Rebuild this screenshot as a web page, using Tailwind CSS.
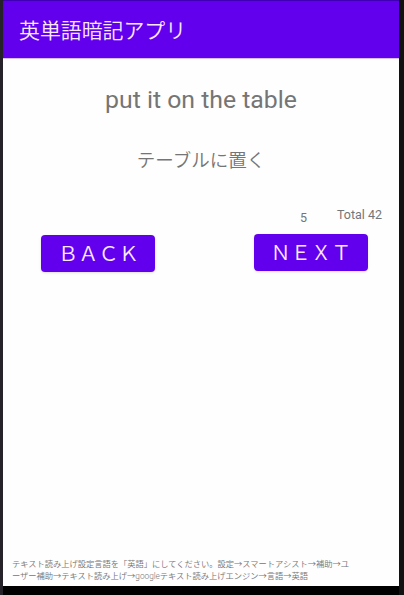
<!DOCTYPE html>
<html lang="ja">
<head>
    <meta charset="UTF-8">
    <meta name="viewport" content="width=device-width, initial-scale=1.0">
    <title>英単語暗記アプリ</title>
    <script src="https://cdn.jsdelivr.net/npm/@tailwindcss/browser@4"></script>
</head>
<body class="h-screen overflow-hidden bg-black font-['Roboto','Noto_Sans_CJK_JP',sans-serif]">
    <div class="h-full border-l-3 border-l-[#252329] border-r-5 border-r-[#111111]">
        <div class="flex h-[586px] flex-col bg-[#fefefe] text-[#757575]">
            <!-- App bar -->
            <header class="flex h-[59px] shrink-0 items-center border-t border-b border-t-[#3f00b5] border-b-[#d9bdf8] bg-[#6200ee] pb-[2px] pl-[16px]">
                <h1 class="font-['Noto_Sans_CJK_JP',sans-serif] text-[20.9px] leading-6 font-[350] whitespace-nowrap text-[#fbe8ff]">英単語暗記アプリ</h1>
            </header>

            <!-- Word -->
            <main class="flex flex-1 flex-col">
                <p class="mt-[25px] text-center text-[24.8px] leading-8">put it on the table</p>
                <p class="mt-[31px] text-center text-[18.5px] leading-7 font-[350]">テーブルに置く</p>

                <!-- Counter -->
                <div class="mt-[31px] flex justify-end pr-[17px] text-[12.5px] leading-4">
                    <span class="mt-[4px] mr-[30px]">5</span>
                    <span class="mt-px">Total 42</span>
                </div>

                <div class="mt-[8px] flex justify-between pr-[31px] pl-[38px]">
                    <button class="mt-px h-[37px] w-[114px] rounded-[4px] bg-[#6200ee] pl-px font-['Noto_Sans_CJK_JP',sans-serif] text-[20.2px] leading-none font-[350] text-[#fbe8ff] shadow-sm">ＢＡＣＫ</button>
                    <button class="mb-px h-[37px] w-[114px] rounded-[4px] bg-[#6200ee] font-['Noto_Sans_CJK_JP',sans-serif] text-[20.2px] leading-none font-[350] text-[#fbe8ff] shadow-sm">ＮＥＸＴ</button>
                </div>
            </main>

            <!-- Note -->
            <footer class="pb-[4px] pl-[9px] text-[8.26px] leading-[12px] font-[350] whitespace-nowrap">
                テキスト読み上げ設定言語を「英語」にしてください。設定→スマートアシスト→補助→ユ<br>ーザー補助→テキスト読み上げ→googleテキスト読み上げエンジン→言語→英語
            </footer>
        </div>
    </div>
</body>
</html>
